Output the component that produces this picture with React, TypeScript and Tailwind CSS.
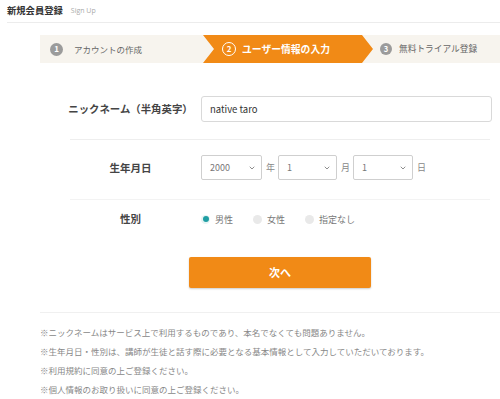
import { ChevronDown } from "lucide-react";

const font = { fontFamily: '"Noto Sans CJK JP", "Noto Sans", sans-serif' };

function FakeSelect({ value, width }: { value: string; width: string }) {
  return (
    <div
      className={`${width} h-[25px] flex items-center justify-between border border-[#cfcfcf] rounded-[2px] bg-white pl-[8px] pr-[5px] text-[9px] text-[#777]`}
    >
      <span>{value}</span>
      <ChevronDown size={8} strokeWidth={2.5} className="text-[#777]" />
    </div>
  );
}

function Radio({ label, checked }: { label: string; checked?: boolean }) {
  return (
    <div className="flex items-center gap-[5px]">
      {checked ? (
        <span className="w-[9px] h-[9px] rounded-full bg-[#e6f4f4] flex items-center justify-center">
          <span className="w-[6px] h-[6px] rounded-full bg-[#1f9ea3]" />
        </span>
      ) : (
        <span className="w-[9px] h-[9px] rounded-full bg-[#e9e9e9]" />
      )}
      <span className="text-[9px] text-[#777] leading-none">{label}</span>
    </div>
  );
}

export default function App() {
  return (
    <div className="w-[500px] h-[399px] overflow-hidden bg-white" style={font}>
      {/* header */}
      <div className="ml-[7px] h-[23px] border-b border-[#ececec] flex items-center gap-[8px]">
        <span className="text-[9.3px] font-bold text-[#333]">新規会員登録</span>
        <span className="text-[7px] text-[#aaa]" style={{ fontFamily: '"Open Sans", sans-serif' }}>
          Sign Up
        </span>
      </div>

      {/* steps */}
      <div className="mt-[12px] ml-[40px] h-[28px] bg-[#f7f4ee] flex items-center">
        <div className="w-[163px] flex items-center pl-[10px] gap-[11px]">
          <span className="w-[13px] h-[13px] rounded-full bg-[#9b9b9b] text-white text-[8px] font-bold flex items-center justify-center">
            1
          </span>
          <span className="text-[8.5px] text-[#666]">アカウントの作成</span>
        </div>
        <div className="w-[170px] h-[28px] bg-[#f18a16] flex items-center pl-[19px] gap-[6px] [clip-path:polygon(0_0,calc(100%-11px)_0,100%_50%,calc(100%-11px)_100%,0_100%,11px_50%)]">
          <span className="w-[14px] h-[14px] rounded-full border-[1.5px] border-white text-white text-[8px] font-bold flex items-center justify-center">
            2
          </span>
          <span className="text-[9.8px] font-bold text-white">ユーザー情報の入力</span>
        </div>
        <div className="flex items-center pl-[7px] gap-[7px]">
          <span className="w-[12px] h-[12px] rounded-full bg-[#9b9b9b] text-white text-[7.5px] font-bold flex items-center justify-center">
            3
          </span>
          <span className="text-[8.7px] text-[#666]">無料トライアル登録</span>
        </div>
      </div>

      {/* nickname */}
      <div className="mt-[33px] flex items-center">
        <div className="ml-[60px] w-[141px] text-center text-[10.4px] font-bold text-[#444]">
          ニックネーム（半角英字）
        </div>
        <div className="w-[291px] h-[26px] border border-[#d9d9d9] rounded-[3px] flex items-center pl-[8px] text-[9.5px] text-[#333]">
          native taro
        </div>
      </div>

      <div className="mt-[17px] ml-[70px] w-[420px] border-t border-[#eeeeee]" />

      {/* birthday */}
      <div className="mt-[15px] flex items-center">
        <div className="ml-[60px] w-[141px] text-center text-[10.5px] font-bold text-[#444]">生年月日</div>
        <div className="flex items-center text-[9px] text-[#888]">
          <FakeSelect value="2000" width="w-[61px]" />
          <span className="ml-[4px] mr-[3px]">年</span>
          <FakeSelect value="1" width="w-[59px]" />
          <span className="ml-[4px] mr-[3px]">月</span>
          <FakeSelect value="1" width="w-[60px]" />
          <span className="ml-[4px]">日</span>
        </div>
      </div>

      <div className="mt-[19px] ml-[70px] w-[420px] border-t border-[#f3f3f3]" />

      {/* gender */}
      <div className="mt-[12px] h-[14px] flex items-center">
        <div className="ml-[60px] w-[141px] text-center text-[10.5px] font-bold text-[#444]">性別</div>
        <div className="flex items-center gap-[20px]">
          <Radio label="男性" checked />
          <Radio label="女性" />
          <Radio label="指定なし" />
        </div>
      </div>

      {/* button */}
      <div className="mt-[31px] ml-[189px] w-[182px] h-[31px] bg-[#f18a16] rounded-[2px] shadow-[0_1px_2px_rgba(0,0,0,0.2)] flex items-center justify-center text-white text-[11px] font-bold">
        次へ
      </div>

      <div className="mt-[24px] ml-[40px] border-t border-[#f0f0f0]" />

      {/* notes */}
      <div className="mt-[10px] ml-[40px] text-[8.5px] leading-[19px] text-[#888]">
        <p>※ニックネームはサービス上で利用するものであり、本名でなくても問題ありません。</p>
        <p>※生年月日・性別は、講師が生徒と話す際に必要となる基本情報として入力していただいております。</p>
        <p>※利用規約に同意の上ご登録ください。</p>
        <p>※個人情報のお取り扱いに同意の上ご登録ください。</p>
      </div>
    </div>
  );
}
